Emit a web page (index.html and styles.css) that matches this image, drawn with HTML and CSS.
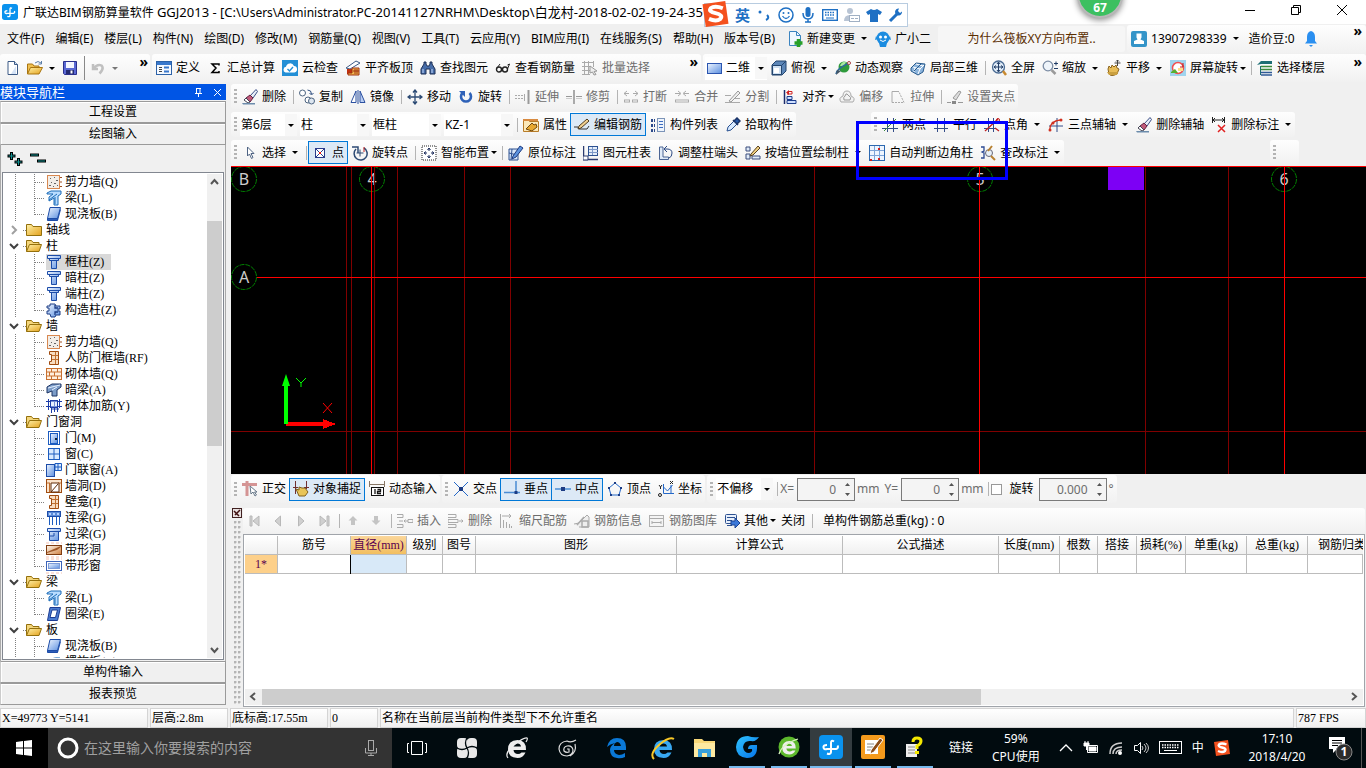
FILE: index.html
```html
<!DOCTYPE html>
<html lang="zh-CN">
<head>
<meta charset="utf-8">
<title>广联达BIM钢筋算量软件 GGJ2013</title>
<link rel="stylesheet" href="styles.css">
</head>
<body>
<svg class="sprite" aria-hidden="true">
<defs>
<linearGradient id="gb" x1="0" y1="0" x2="1" y2="1"><stop offset="0" stop-color="#eef5ff"/><stop offset="1" stop-color="#5b8fe0"/></linearGradient>
<linearGradient id="gy" x1="0" y1="0" x2="1" y2="1"><stop offset="0" stop-color="#fff1a8"/><stop offset="1" stop-color="#e3a11c"/></linearGradient>
<linearGradient id="go" x1="0" y1="0" x2="1" y2="1"><stop offset="0" stop-color="#fffaf0"/><stop offset="1" stop-color="#d08040"/></linearGradient>
<linearGradient id="gs" x1="0" y1="0" x2="1" y2="1"><stop offset="0" stop-color="#2fc4ff"/><stop offset="1" stop-color="#0572e8"/></linearGradient>
</defs>
<symbol id="logo" viewBox="0 0 24 24"><rect width="24" height="24" rx="4" fill="#0a92ee"/><path d="M15 6.500Q12 4.500 12 8v9q-.5 3-4 1.500M8 10q-4 0-3.500 2.500T8 14h9q3-1 1.500-3.500" fill="none" stroke="#fff" stroke-width="2"/></symbol>
<symbol id="new" viewBox="0 0 16 16"><path d="M3 1.500h6.500l3 3v10h-9.500z" fill="#fff" stroke="#3c5a86"/><path d="M9.500 1.500v3h3" fill="#cfe0f5" stroke="#3c5a86"/><path d="M11 6v8H6z" fill="#d5e3f6"/></symbol>
<symbol id="open" viewBox="0 0 16 16"><path d="M.5 14V4h5l1.500 2h5v3" fill="#f0c050" stroke="#a87410"/><path d="M.5 14l3-6.500h12L12 14z" fill="url(#gy)" stroke="#a87410"/><path d="M8 3q3-3 6 0M14.500 1v3h-3" fill="none" stroke="#5c7ea8"/></symbol>
<symbol id="save" viewBox="0 0 16 16"><path d="M1.500 1.500h13v13h-12l-1-1z" fill="#5968d4" stroke="#2a2f8c"/><path d="M4 2h8v6H4z" fill="#f4f6ff"/><path d="M4 10h8v4H4z" fill="#232a70"/><path d="M8.500 10.500h2v3h-2z" fill="#fff"/></symbol>
<symbol id="undo" viewBox="0 0 16 16"><path d="M3 4v5h5M3.500 8.500q4-5 8-3 3 3-2 8" fill="none" stroke="#c0c0c0" stroke-width="2.500"/></symbol>
<symbol id="define" viewBox="0 0 16 16"><rect x=".5" y="1.500" width="15" height="13" fill="#f5f9ff" stroke="#2c62a8"/><path d="M1 2h14v3H1z" fill="#3978cc"/><path d="M3 7.500h3M3 9.500h3M3 11.500h3" stroke="#444"/><path d="M8 7.500h5M8 11.500h5" stroke="#3978cc" stroke-width="2"/></symbol>
<symbol id="sigma" viewBox="0 0 16 16"><path d="M12 5.500V4H5l4 4-4 4.500h7V11" fill="none" stroke="#000" stroke-width="1.500"/></symbol>
<symbol id="cloud" viewBox="0 0 16 16"><rect width="16" height="16" fill="#238fd6"/><path d="M3.500 12.500a3 3 0 0 1 .5-5.800A4.200 4.200 0 0 1 12 6a3.300 3.300 0 0 1 .5 6.500z" fill="#fff"/><path d="M5.500 9l2 2 3.500-4" fill="none" stroke="#238fd6" stroke-width="1.400"/></symbol>
<symbol id="slabtop" viewBox="0 0 16 16"><path d="M1 8L11 1l4 2L5 9z" fill="#fff" stroke="#3c5a86"/><path d="M2 9h5v5H2z" fill="#c03010"/><path d="M7 8l7 0v7H3v-2h4z" fill="#f0b850" stroke="#a03010"/><path d="M8 11h6M10 9v5M12 9v5" stroke="#a03010"/></symbol>
<symbol id="bino" viewBox="0 0 16 16"><path d="M4 2h2v2l1 2h2l1-2V2h2v2l3 5v5h-5V9H6v5H1V9l3-5z" fill="#466ca8" stroke="#1d2f55"/><path d="M3 9v4M12 9v4" stroke="#c8dcff"/></symbol>
<symbol id="glasses" viewBox="0 0 16 16"><circle cx="4" cy="9.500" r="2.500" fill="none" stroke="#222" stroke-width="1.400"/><circle cx="10" cy="9.500" r="2.500" fill="none" stroke="#222" stroke-width="1.400"/><path d="M6 9h2M12.500 9l2-5-2 1M2 8l3-4" fill="none" stroke="#222"/></symbol>
<symbol id="batch" viewBox="0 0 16 16"><path d="M0 2.500h12M0 6.500h8M0 10.500h8M0 14.500h8M2.500 1v14M6.500 1v14M11.500 1v6" stroke="#aaa" fill="none"/><path d="M8 6l7 5-3 .5 2 3-2 .5-1.500-3L8 13z" fill="#eee" stroke="#999"/></symbol>
<symbol id="rect2d" viewBox="0 0 16 16"><rect x=".5" y="3.500" width="14" height="10" fill="url(#gb)" stroke="#2b55b0"/></symbol>
<symbol id="cube" viewBox="0 0 16 16"><path d="M1 5l4-4h10v10l-4 4H1z" fill="#5c86b8" stroke="#23456e"/><path d="M1.500 5.500h9v9h-9z" fill="#cfe0f2" stroke="#23456e"/><path d="M3 8h5v5H3z" fill="#fff"/><path d="M10.500 5.500L15 1" stroke="#23456e"/></symbol>
<symbol id="orbit" viewBox="0 0 16 16"><circle cx="9" cy="7" r="5.500" fill="#2f9b3c"/><path d="M5 6q2-5 6-4l-2 4z" fill="#a8e8a0"/><path d="M1 14q0-5 13-11" fill="none" stroke="#2c6a9c" stroke-width="1.500"/><path d="M2 10l4 1-5 4z" fill="#456"/><circle cx="14" cy="3" r="1.500" fill="#fff" stroke="#a44"/></symbol>
<symbol id="local3d" viewBox="0 0 16 16"><path d="M1 8l5-5 9 1-2 8-5 3-7-4z" fill="#8cb4dc" stroke="#285a8c"/><path d="M3 7l7 2 4-4M6 4l7 2M10 9l-2 5M5 8l-1 4" fill="none" stroke="#fff"/><path d="M4 11l7-7" stroke="#285a8c"/></symbol>
<symbol id="full" viewBox="0 0 16 16"><circle cx="7.500" cy="7" r="6" fill="#e0ecf8" stroke="#4b6c94" stroke-width="1.300"/><path d="M7.500 2.500v9M3 7h9M6 4l1.500-2L9 4M6 10l1.500 2L9 10M5 5.500L3 7l2 1.500M10 5.500L12 7l-2 1.500" fill="none" stroke="#203c66"/><path d="M12 11l3 4" stroke="#c88a30" stroke-width="2.500"/></symbol>
<symbol id="zoom" viewBox="0 0 16 16"><circle cx="6" cy="6" r="4.800" fill="#eef4fa" stroke="#7b8ca4" stroke-width="1.300"/><path d="M9.500 10l4 4" stroke="#9a9a9a" stroke-width="2.500"/><path d="M12 3.500h4M14 1.500v4M12 8.500h4" stroke="#203c66"/></symbol>
<symbol id="pan" viewBox="0 0 16 16"><path d="M2 9l1-3 2 2 1-3 2 2 2-2 1 3 2 1-2 5q-6 3-8 0z" fill="#e8bd58" stroke="#8a6420"/><path d="M1 12h11l-1 3H3z" fill="#caa040"/><path d="M11.500 0v6M8.500 3h6M10 1.500l1.500-1.500 1.500 1.500" stroke="#444" fill="none"/></symbol>
<symbol id="srot" viewBox="0 0 16 16"><rect width="16" height="16" fill="#9fd4ee"/><circle cx="8" cy="8" r="5.500" fill="#fff" stroke="#f05050" stroke-width="1.500"/><path d="M1 12l4-3 3 4H1z" fill="#58b030"/><path d="M8 8h5v3H8z" fill="#ffe08a"/><path d="M13 3v4h-3" fill="none" stroke="#c02020"/></symbol>
<symbol id="floors" viewBox="0 0 16 16"><path d="M0 5l4-4h11v3H4z" fill="#1d6e74"/><path d="M4 6.500h11M4 9.500h11" stroke="#3b8a3c" stroke-width="1.500"/><path d="M4 12.500h11M4 15h11" stroke="#2f5a96" stroke-width="1.500"/><path d="M3.500 6v9" stroke="#1d6e74"/></symbol>
<symbol id="brush" viewBox="0 0 16 16"><path d="M8 7l6-6.500 1.500 2L11 9z" fill="#e8eef8" stroke="#3c4f86"/><path d="M4 9l4-3 3 3-3 4z" fill="#c05a7a" stroke="#602040"/><path d="M4 9l4 4-2 1-4-3z" fill="#fff" stroke="#445"/><path d="M0 14h7l6 0v1.500H1z" fill="#6c8cac"/></symbol>
<symbol id="copy" viewBox="0 0 16 16"><circle cx="3.500" cy="4" r="3" fill="#fff" stroke="#4d6480"/><circle cx="9" cy="11" r="3" fill="#fff" stroke="#4d6480"/><circle cx="12.500" cy="12" r="3" fill="#dde6f0" stroke="#4d6480"/><path d="M8.500 1q4 0 4 4M10.500 4l2 2 2-2" fill="none" stroke="#2f4f80"/></symbol>
<symbol id="mirror" viewBox="0 0 16 16"><path d="M1 13.500L6 2v11.500z" fill="#fff" stroke="#2b50a0"/><path d="M15 13.500L10 2v11.500z" fill="#b9cdf2" stroke="#2b50a0"/><path d="M8 1v14" stroke="#2b50a0"/></symbol>
<symbol id="move" viewBox="0 0 16 16"><path d="M8 1v14M1 8h14M6 3.500L8 1l2 2.500M6 12.500L8 15l2-2.500M3.500 6L1 8l2.500 2M12.500 6L15 8l-2.500 2" fill="none" stroke="#2c4a74" stroke-width="1.300"/></symbol>
<symbol id="rotate" viewBox="0 0 16 16"><path d="M4.500 4a5 5 0 1 0 7 0" fill="none" stroke="#2f62b8" stroke-width="2.600"/><path d="M1 2h6v6z" fill="#2f62b8"/></symbol>
<symbol id="extend" viewBox="0 0 16 16"><path d="M0 6.500h8M0 9.500h8" stroke="#aaa" stroke-dasharray="2 1"/><path d="M9.500 5v7" stroke="#aaa"/><path d="M13.500 1v14" stroke="#999" stroke-width="2"/></symbol>
<symbol id="trim" viewBox="0 0 16 16"><path d="M0 7.500h6M10 7.500h6" stroke="#999"/><path d="M0 9.500h6M10 9.500h6" stroke="#ccc"/><path d="M8 1v14" stroke="#aaa" stroke-width="2"/></symbol>
<symbol id="brk" viewBox="0 0 16 16"><path d="M1 4.500h5M4 2L1 4.500 4 7M15 4.500h-5M12 2l3 2.500L12 7" fill="none" stroke="#aaa"/><path d="M1 12h6M9 12h6" stroke="#aaa" stroke-width="3"/><path d="M2 12h4M10 12h4" stroke="#fff"/></symbol>
<symbol id="merge" viewBox="0 0 16 16"><path d="M1 4.500h5M4 2l3 2.500L4 7M15 4.500h-5M12 2L9 4.500 12 7" fill="none" stroke="#aaa"/><path d="M1 12h14" stroke="#aaa" stroke-width="3"/><path d="M2 12h12" stroke="#fff"/></symbol>
<symbol id="split" viewBox="0 0 16 16"><path d="M0 6.500h6M0 13.500h15M10 9.500h5" stroke="#aaa"/><path d="M4 12L13 2l2 2-9 9z" fill="#eee" stroke="#999"/></symbol>
<symbol id="align" viewBox="0 0 16 16"><path d="M2.500 1v14" stroke="#1c2c6c" stroke-width="1.500"/><path d="M5 5h5V2.500H7" fill="none" stroke="#d02020"/><path d="M7 1L4 3.500 7 6z" fill="#d02020"/><path d="M5 7.500h5v3H5zM5 11.500h9v3H5z" fill="#cfe0ff" stroke="#1c3c8c"/></symbol>
<symbol id="offset" viewBox="0 0 16 16"><path d="M2 13q-3-4 2-6 0-5 4-5t4 5q5 2 2 6z" fill="#f2f2f2" stroke="#aaa"/><path d="M5 11q-1-3 1-4 1-3 2-2t2 2q3 1 1 4z" fill="none" stroke="#999"/></symbol>
<symbol id="stretch" viewBox="0 0 16 16"><path d="M2 13.500V2.500h7" fill="none" stroke="#aaa"/><path d="M2 13.500h12L9 3" fill="none" stroke="#aaa" stroke-dasharray="2 1"/></symbol>
<symbol id="grip" viewBox="0 0 16 16"><path d="M0 13.500h4M11 13.500h5" stroke="#999"/><path d="M6 9l6-7 2 1-5 8z" fill="#ddd" stroke="#999"/><path d="M5 12h4v3H5z" fill="#888"/></symbol>
<symbol id="prop" viewBox="0 0 16 16"><path d="M.5 2.500h5l1 2h9v10H.5z" fill="#fbe8b8" stroke="#b87c28"/><path d="M0 2h15v2H0z" fill="#d88a40"/><path d="M3 12l6-6 2 2 2-1 1 3-5 4z" fill="#e8a830" stroke="#704810"/></symbol>
<symbol id="editbar" viewBox="0 0 16 16"><path d="M0 10h4l1 2h8l2-3" fill="none" stroke="#333"/><path d="M5 9l8-7 2 2-8 7-3 1z" fill="#f0d090" stroke="#503c20"/></symbol>
<symbol id="list" viewBox="0 0 16 16"><path d="M1 3.500h4M1 8.500h4M1 13.500h4" stroke="#2c4a8c" stroke-width="3" stroke-dasharray="2 1"/><rect x="7.500" y="1.500" width="7" height="13" fill="#eef4fc" stroke="#7c94b8"/><path d="M9 4.500h4M9 7.500h4M9 10.500h4" stroke="#3c6cc0"/></symbol>
<symbol id="pick" viewBox="0 0 16 16"><path d="M2 14l1-4 6-6 3 3-6 6z" fill="#d8eaff" stroke="#285090"/><path d="M8 3l5 5M9 4l3-3 3 3-3 3z" fill="#2458a8" stroke="#1c3468" stroke-width="1.500"/></symbol>
<symbol id="twopt" viewBox="0 0 16 16"><path d="M0 5.500h16M0 11.500h16M5.500 1v14M11.500 1v14" stroke="#334c88"/><path d="M2 14L14 2" stroke="#3c8c3c"/><circle cx="11.500" cy="5" r="1.500" fill="#c02020"/></symbol>
<symbol id="para" viewBox="0 0 16 16"><path d="M1 4.500h14M1 11.500h14M4.500 1v14M11.500 1v14" stroke="#334c88"/></symbol>
<symbol id="ptang" viewBox="0 0 16 16"><path d="M0 5.500h12M0 11.500h12M4.500 1v14M9.500 1v14" stroke="#334c88"/><path d="M1 14L14 2M11 11l4 3" stroke="#c02020" stroke-width="1.300"/><circle cx="14" cy="3" r="1.500" fill="none" stroke="#c02020"/></symbol>
<symbol id="three" viewBox="0 0 16 16"><path d="M9 1v14M1 9h14" stroke="#334c88"/><path d="M2 14q-1-10 11-11" fill="none" stroke="#d03020" stroke-width="1.300"/><circle cx="2" cy="13" r="1.500" fill="#d03020"/><circle cx="13" cy="3" r="1.500" fill="#d03020"/><circle cx="5" cy="6" r="1.500" fill="#d03020"/></symbol>
<symbol id="deldim" viewBox="0 0 16 16"><path d="M1.500 0v6M13.500 0v6M1 3h12M4 1L2 3l2 2M11 1l2 2-2 2" fill="none" stroke="#222"/><path d="M7 8l7 7M14 8l-7 7" stroke="#e02020" stroke-width="1.500"/></symbol>
<symbol id="cursor" viewBox="0 0 16 16"><path d="M5.500 2v9l2-2 2 4.500 1.500-1-2-4h3z" fill="#fff" stroke="#4f6484"/></symbol>
<symbol id="point" viewBox="0 0 16 16"><rect x="3.500" y="3.500" width="9" height="9" fill="#fff" stroke="#2a3c8c"/><path d="M4 4l8 8M12 4l-8 8" stroke="#2a3c8c"/><path d="M7 7h2v2H7z" fill="#e02020"/></symbol>
<symbol id="rotpt" viewBox="0 0 16 16"><path d="M12 3a6.500 6.500 0 1 1-8 1" fill="none" stroke="#2c4a74" stroke-width="1.500"/><path d="M0 2h6v6" fill="none" stroke="#2c4a74" stroke-width="1.500"/><path d="M8 4.500v7M4.500 8h7" stroke="#2c4a74"/><path d="M12 2v5" stroke="#c02020"/></symbol>
<symbol id="smart" viewBox="0 0 16 16"><rect x="1" y="1" width="14" height="14" fill="#fff" stroke="#222" stroke-dasharray="1 1"/><path d="M8 3v3M8 10v3M3 8h3M10 8h3M6.500 5L8 3l1.500 2M6.500 11L8 13l1.500-2M5 6.500L3 8l2 1.500M11 6.500L13 8l-2 1.500" fill="none" stroke="#1c2c5c"/></symbol>
<symbol id="situ" viewBox="0 0 16 16"><path d="M1 4h9v11H1z" fill="#d8e6f8" stroke="#2c5090"/><path d="M1 8l8 2M4 4l-1 11" stroke="#2c5090"/><path d="M5 11l7-10 3 2-7 9-4 2z" fill="#5c94e0" stroke="#203c80"/></symbol>
<symbol id="coltab" viewBox="0 0 16 16"><path d="M.5 1v14M0 14.500h15" stroke="#2c3c70" stroke-width="1.500"/><rect x="5.500" y="1.500" width="9" height="9" fill="#e4edf9" stroke="#2c5090"/><path d="M6 4.500h9M6 7.500h9M9.500 2v8" stroke="#7c98c8"/><path d="M0 11h5v4H0z" fill="#fff" stroke="#2c3c70"/></symbol>
<symbol id="adj" viewBox="0 0 16 16"><path d="M1.500 2v12.500h9V12H5V2z" fill="#dfeaf8" stroke="#4a6494"/><path d="M7 4h2q5 0 5 4t-3 5M9 1L6 4l3 3" fill="none" stroke="#2c4a84"/></symbol>
<symbol id="wallcol" viewBox="0 0 16 16"><path d="M1 2h4v4H1zM1 9h4v5H1zM7 11h8v3H7z" fill="#dfeaf8" stroke="#3a4c7c"/><path d="M6 9l7-8 2 2-7 7-3 1z" fill="#f0d080" stroke="#584020"/></symbol>
<symbol id="corner" viewBox="0 0 16 16"><rect x=".5" y=".5" width="15" height="15" fill="#eef5ff" stroke="#2c68b0"/><path d="M5.500 1v14M10.500 1v14M1 5.500h14M1 10.500h14" stroke="#7ca4d8"/><path d="M1 14h2v2H1zM9 13h2v2H9zM9 3h2v2H9z" fill="#d02020"/></symbol>
<symbol id="check" viewBox="0 0 16 16"><path d="M1 2h3v4l-2 1 2 1v5H1" fill="none" stroke="#2c4a94" stroke-width="1.300"/><circle cx="9" cy="8" r="3.500" fill="#e8f0f8" stroke="#667"/><path d="M11 11l4 4M8 6l4-5" stroke="#b88030" stroke-width="2"/></symbol>
<symbol id="ortho" viewBox="0 0 16 16"><path d="M0 3.500h15M5 0v15" stroke="#d49494" stroke-width="3"/><path d="M8 5l1 8 2-2 2 4 1.500-1-2-3h2.500z" fill="#fff" stroke="#678"/></symbol>
<symbol id="snap" viewBox="0 0 16 16"><path d="M2.500 0v13M13.500 0v8M0 6.500h5M11 6.500h5" stroke="#703030"/><path d="M3 8l3 1 0-3 3 1 3 0 3 4-3 4H6z" fill="#e8c458" stroke="#80601c"/></symbol>
<symbol id="dyn" viewBox="0 0 16 16"><path d="M.5 0v6M15.500 0v6M0 3.500h16" stroke="#876"/><rect x="2.500" y="6.500" width="12" height="8" fill="#fff" stroke="#111"/><path d="M6 8v5M8.500 8.500h3v2h-3v2h3.500" fill="none" stroke="#111" stroke-width="1.300"/></symbol>
<symbol id="inter" viewBox="0 0 16 16"><path d="M1 1l14 14M15 1L1 15" stroke="#2468c8"/><path d="M6 6h4v4H6z" fill="#1c3c84"/></symbol>
<symbol id="perp" viewBox="0 0 16 16"><path d="M0 11.500h16M12 0v12" stroke="#4a8cd4" stroke-width="1.500"/><path d="M10.500 10h3v3h-3z" fill="#1c3c84"/></symbol>
<symbol id="mid" viewBox="0 0 16 16"><path d="M0 8h16" stroke="#4a8cd4" stroke-width="1.500"/><path d="M6 6h4v4H6z" fill="#1c3c84"/></symbol>
<symbol id="vert" viewBox="0 0 16 16"><path d="M8 2l6 5-2 7H4L2 7z" fill="none" stroke="#2468c8"/><path d="M7 1h2v2H7zM1 6h2v2H1zM13 6h2v2h-2zM3 13h2v2H3zM11 13h2v2h-2z" fill="#1c3c84"/></symbol>
<symbol id="coord" viewBox="0 0 16 16"><path d="M5.500 3v9.500H16M5.500 6l4 4 5-6M13 4v9" fill="none" stroke="#2468c8"/><path d="M1 4l1.500 2L4 4M2.500 6v2M12 0l3 3M15 0l-3 3" stroke="#222" fill="none"/><circle cx="2" cy="14" r="1.500" fill="none" stroke="#222"/></symbol>
<symbol id="first" viewBox="0 0 16 16"><path d="M3 3h2v10H3zM12 3v10L6 8z" fill="#d0d0d0" stroke="#b8b8b8"/></symbol>
<symbol id="prev" viewBox="0 0 16 16"><path d="M10.500 3v10L5 8z" fill="#d0d0d0" stroke="#b8b8b8"/></symbol>
<symbol id="next" viewBox="0 0 16 16"><path d="M5.500 3v10L11 8z" fill="#d0d0d0" stroke="#b8b8b8"/></symbol>
<symbol id="last" viewBox="0 0 16 16"><path d="M11 3h2v10h-2zM4 3v10l6-5z" fill="#d0d0d0" stroke="#b8b8b8"/></symbol>
<symbol id="up" viewBox="0 0 16 16"><path d="M8 3l4.500 4.500H10V12H6V7.500H3.500z" fill="#c4c4c4"/></symbol>
<symbol id="down" viewBox="0 0 16 16"><path d="M8 12L3.500 7.500H6V3h4v4.500h2.500z" fill="#c4c4c4"/></symbol>
<symbol id="ins" viewBox="0 0 16 16"><path d="M0 1.500h6v3H0M0 11.500h6v3H0M6 8H2M11 6.500h5v3h-5zM7 8h4M8.500 6.500L7 8l1.500 1.500" fill="none" stroke="#aaa"/></symbol>
<symbol id="rem" viewBox="0 0 16 16"><path d="M0 1.500h8v3H0M0 11.500h8v3H0M0 6.500h10v3H0zM11 8h4M13.500 6.500L15 8l-1.500 1.500" fill="none" stroke="#aaa"/></symbol>
<symbol id="scale" viewBox="0 0 16 16"><path d="M1.500 1v14M3 3h9M10 1l2 2-2 2M4.500 7v8M7.500 9v6M10.500 11v4M12.500 13v2" fill="none" stroke="#aaa"/></symbol>
<symbol id="info" viewBox="0 0 16 16"><path d="M0 11l5-1 8-8 2 2v10H5" fill="#eee" stroke="#aaa"/><path d="M3 12l7-8M8 8h6v6H8z" fill="none" stroke="#aaa" stroke-width="1.500"/></symbol>
<symbol id="lib" viewBox="0 0 16 16"><rect x=".5" y="2.500" width="14" height="11" fill="#f4f4f4" stroke="#b0b0b0"/><path d="M1 5.500h13M3 8v3M3 9.500h9M12 8v3" stroke="#aaa"/></symbol>
<symbol id="other" viewBox="0 0 16 16"><rect x="1.500" y="1.500" width="11" height="9" rx="1" fill="#e8f0fc" stroke="#2c5090"/><path d="M3 4.500h8M3 7.500h5M3 12.500h5" stroke="#2c5090"/><path d="M7 8h4V5l5 5-5 5v-3H7z" fill="#3c78d8" stroke="#1c4494"/></symbol>
<symbol id="addpage" viewBox="0 0 16 16"><path d="M2.500 .5h7l4 4v10h-11z" fill="#f0f8ff" stroke="#3c84c0"/><path d="M9.500 .5v4h4" fill="none" stroke="#3c84c0"/><path d="M11.500 8v8M7.500 12h8" stroke="#28a028" stroke-width="3.500"/></symbol>
<symbol id="mascot" viewBox="0 0 16 16"><circle cx="8" cy="7" r="6.500" fill="#1c8ce0"/><path d="M1 5L0 9l3-1M15 5l1 4-3-1M4 12h8l-1 4H5z" fill="#1c8ce0"/><circle cx="5.500" cy="6" r="1.500" fill="#fff"/><circle cx="10.500" cy="6" r="1.500" fill="#fff"/><path d="M5 9q3 3 6 0" fill="none" stroke="#fff"/></symbol>
<symbol id="user" viewBox="0 0 16 16"><rect width="16" height="16" rx="2" fill="#3494c8"/><path d="M5.500 2.500h5v4l-1 2 3.500 1.500V13H3v-3l3.500-1.500-1-2z" fill="#fff"/></symbol>
<symbol id="bell" viewBox="0 0 16 16"><path d="M8 0q4 1 4 6v4l2 2.500H2L4 10V6q0-5 4-6zM6 14h4l-2 2z" fill="#2a8ff0"/></symbol>
<symbol id="plus2" viewBox="0 0 16 16"><path d="M4.500 1v8M.5 5h8M11.500 7v8M7.500 11h8" stroke="#000" stroke-width="3"/><path d="M4.500 2v6M1.500 5h6M11.500 8v6M8.500 11h6" stroke="#109090"/></symbol>
<symbol id="minus2" viewBox="0 0 16 16"><path d="M0 4h9M7 10h9" stroke="#000" stroke-width="3"/><path d="M1 4h7M8 10h7" stroke="#109090"/></symbol>
<symbol id="folder" viewBox="0 0 16 16"><path d="M.5 13.500v-11h5l1.500 2h8.500v9z" fill="url(#gy)" stroke="#94700c"/></symbol>
<symbol id="fopen" viewBox="0 0 16 16"><path d="M.5 13.500v-11h5l1.500 2h6v2" fill="#f4d67c" stroke="#94700c"/><path d="M.5 13.500l3-7h12l-2.500 7z" fill="url(#gy)" stroke="#94700c"/></symbol>
<symbol id="conc" viewBox="0 0 16 16"><rect x="1.500" y="1.500" width="12" height="13" fill="#f2eee8" stroke="#d88850"/><path d="M4 4h1v1H4zM8 3h1v1H8zM10 6h2v1h-2zM5 8h1v1H5zM8 9h2v1H8zM3 11h2v1H3zM7 12h1v1H7zM11 11h1v1h-1z" fill="#666"/><path d="M14 3.500h2M14 8h2M14 12.500h2" stroke="#a05020"/></symbol>
<symbol id="beam" viewBox="0 0 16 16"><path d="M1 3l4-2h10v3l-3 2v9H8V8L3 11V7l4-3H1z" fill="#b8dcff" stroke="#1c6cb8"/><path d="M3 10l8-6M9 7v7" stroke="#1c6cb8"/></symbol>
<symbol id="slab" viewBox="0 0 16 16"><path d="M4 1.500h10.500l-3 11H1.500z" fill="url(#gb)" stroke="#1c4ca8"/><path d="M1.500 12.500h10v2h-10zM11.500 14.500l3-11" fill="#2c5cb8" stroke="#1c4ca8"/></symbol>
<symbol id="col" viewBox="0 0 16 16"><path d="M1.500 1.500h13v3h-13zM3.500 4.500h9v2h-9zM5.500 6.500h5v8h-5z" fill="url(#gb)" stroke="#1c4ca8"/></symbol>
<symbol id="gz" viewBox="0 0 16 16"><path d="M4 2h5l1 2h4v3h-2v2h2v4h-4l-1 2H5l-1-3H1V9h2V6H1V4h3z" fill="url(#gb)" stroke="#1c3c84"/><path d="M9 3v3h3M9 13v-3h3" fill="none" stroke="#1c3c84" stroke-width="1.300"/></symbol>
<symbol id="frame" viewBox="0 0 16 16"><path d="M3.500 1.500h9v13h-9v-3h2v-7h-2z" fill="#f8dcc0" stroke="#a04c10"/><path d="M6 5.500h6M6 9.500h6M9.500 2v12" stroke="#c07030"/></symbol>
<symbol id="brick" viewBox="0 0 16 16"><rect x=".5" y="2.500" width="15" height="11" fill="#fff0e0" stroke="#c87030"/><path d="M1 6h14M1 10h14M5.500 3v3M11.500 3v3M8.500 6v4M3.500 6v4M5.500 10v4M11.500 10v4" stroke="#c87030"/></symbol>
<symbol id="dbeam" viewBox="0 0 16 16"><path d="M1 5l5-3h9v3l-4 3v6H6V9l-5 2z" fill="#7c9cc8" stroke="#1c3464"/><path d="M2 6l8-2 4-1M6 8l5-3" stroke="#e4f0ff"/></symbol>
<symbol id="rebar" viewBox="0 0 16 16"><path d="M2.500 1v11M13.500 1v9M0 3.500h16M0 8.500h16M5 11h8M8.500 2v12M5.500 8v7M11.500 2v12" fill="none" stroke="#1c3ca8"/><rect x="4.500" y="2.500" width="7" height="7" fill="#cfe0ff" fill-opacity=".5" stroke="#1c3ca8"/></symbol>
<symbol id="door" viewBox="0 0 16 16"><rect x="2.500" y="1.500" width="11" height="13" fill="#fff" stroke="#1c5cc0"/><rect x="4.500" y="3.500" width="7" height="10" fill="url(#gb)" stroke="#1c5cc0"/><path d="M9 8h2v2H9z" fill="#123"/></symbol>
<symbol id="win" viewBox="0 0 16 16"><rect x="2.500" y="2.500" width="11" height="11" fill="#d8e9ff" stroke="#1c5cc0"/><path d="M8 3v10M3 8h10" stroke="#1c5cc0"/></symbol>
<symbol id="dw" viewBox="0 0 16 16"><rect x=".5" y="2.500" width="8" height="12" fill="url(#gb)" stroke="#1c4ca8"/><path d="M9 1.500h6.500v7H9zM12 2v6M9 5h6" fill="#d8e9ff" stroke="#1c5cc0"/></symbol>
<symbol id="hole" viewBox="0 0 16 16"><rect x=".5" y="1.500" width="15" height="13" fill="#fbe4cc" stroke="#a04c10"/><path d="M1 5h3M12 5h3M3.500 5v9" stroke="#c07030"/><path d="M5 5h8v9H5zM5 14l7-8" fill="#fff" stroke="#602c08"/></symbol>
<symbol id="ll" viewBox="0 0 16 16"><rect x="1.500" y="1.500" width="13" height="5" fill="#5c8cd8" stroke="#1c4ca8"/><path d="M3 3h2v2H3zM7 3h2v2H7zM11 3h2v2h-2z" fill="#b8d4ff"/><path d="M3.500 7v8M6.500 7v8M10.500 7v8M13.500 7v8" stroke="#1c5cc0"/></symbol>
<symbol id="gl" viewBox="0 0 16 16"><path d="M1.500 2.500h13v3h-13zM3.500 5.500h9v9h-9z" fill="url(#gb)" stroke="#1c4ca8"/><path d="M4 10h4V7" stroke="#1c4ca8" fill="none"/></symbol>
<symbol id="sh" viewBox="0 0 16 16"><rect x=".5" y="3.500" width="15" height="9" fill="url(#go)" stroke="#803c10"/><path d="M1 11l10-3 4-3v-1L1 10z" fill="#a05828"/><path d="M0 1h16M0 15h16" stroke="#f4c0b0" stroke-dasharray="3 2"/></symbol>
<symbol id="sw" viewBox="0 0 16 16"><rect x=".5" y="3.500" width="15" height="9" fill="#fff" stroke="#3c64b8"/><rect x="2.500" y="5.500" width="11" height="5" fill="url(#gb)" stroke="#7c9cd8"/><path d="M0 1h16M0 15h16" stroke="#f4c0b0" stroke-dasharray="3 2"/></symbol>
<symbol id="ring" viewBox="0 0 16 16"><path d="M4 1.500h10.500l-3 13H1.500z" fill="#4c7cd0" stroke="#1c3c94"/><path d="M6 4h5.500l-2 7.500H4z" fill="#fff" stroke="#1c3c94"/></symbol>
<symbol id="spiral" viewBox="0 0 16 16"><path d="M1 9q3-6 13-5l1 3Q6 6 3 13z" fill="url(#gb)" stroke="#1c6cb8"/></symbol>
<symbol id="sogou" viewBox="0 0 16 16"><path d="M0 2L14 0l2 14-14 2z" fill="#f4511e"/><path d="M12.500 4.500q-5-2-7.500 0-1.500 2 3 3 5 1 3 3.500-2.500 2-7 0" fill="none" stroke="#fff" stroke-width="2.400"/></symbol>
<symbol id="eball" viewBox="0 0 24 24"><path d="M21 14H8.500q.5 4 4.500 4 2 0 3.500-1.500h4Q18 22 12.500 22 3 21.500 3 13T12.500 4Q21.500 4.500 21 14zM8.500 10.500h7.500q-.5-3-3.500-3t-4 3z" fill="currentColor"/></symbol>
</svg>

<div class="app">
<header class="titlebar">
  <svg class="ic"><use href="#logo"/></svg>
  <h1>广联达BIM钢筋算量软件 <span>GGJ2013 - [C:\</span>Users\Administrator.PC<span>-20141127NRHM\Desktop\白龙村-2018-02-02-19-24-35</span></h1>
  <div class="winctl">
    <button aria-label="最小化"><svg width="12" height="12"><path d="M1 6.500h10" stroke="#000"/></svg></button>
    <button aria-label="还原"><svg width="12" height="12"><path d="M1.500 3.500h7v7h-7zM3.500 3V1.500h7v7H9" fill="none" stroke="#000"/></svg></button>
    <button aria-label="关闭"><svg width="12" height="12"><path d="M1 1l10 10M11 1L1 11" stroke="#000"/></svg></button>
  </div>
  <div class="ball">67</div>
  <div class="ime">
    <svg class="s"><use href="#sogou"/></svg>
    <b>英</b>
    <svg width="16" height="16" viewBox="0 0 16 16"><circle cx="4" cy="5" r="1.500" fill="#1e70c4"/><path d="M11 8q3 3-1 5" fill="none" stroke="#1e70c4" stroke-width="2"/></svg>
    <svg width="16" height="16" viewBox="0 0 16 16"><circle cx="8" cy="8" r="7" fill="none" stroke="#1e70c4" stroke-width="1.500"/><path d="M4.500 9q3.500 5 7 0" fill="none" stroke="#1e70c4" stroke-width="1.300"/><circle cx="5.500" cy="6" r="1" fill="#1e70c4"/><circle cx="10.500" cy="6" r="1" fill="#1e70c4"/></svg>
    <svg width="16" height="16" viewBox="0 0 16 16"><rect x="5.500" y="0" width="5" height="10" rx="2.500" fill="#1e70c4"/><path d="M3 6q0 6 5 6t5-6M8 12v3M5 15h6" fill="none" stroke="#1e70c4" stroke-width="1.500"/></svg>
    <svg width="16" height="16" viewBox="0 0 16 16"><rect x=".7" y="2.700" width="14.600" height="10.600" fill="none" stroke="#1e70c4" stroke-width="1.400"/><path d="M3 5.500h10M3 8h10" stroke="#1e70c4" stroke-width="1.500" stroke-dasharray="1.500 1"/><path d="M4 11h8" stroke="#1e70c4"/></svg>
    <svg width="16" height="16" viewBox="0 0 16 16"><circle cx="6" cy="4" r="3" fill="#b8c4d4"/><path d="M0 14q0-6 6-6h3v6z" fill="#b8c4d4"/><rect x="5.500" y="8.500" width="10" height="6" fill="#fff" stroke="#a0b0c4"/><path d="M7 11.500h3M11 11.500h3" stroke="#a0b0c4"/></svg>
    <svg width="16" height="16" viewBox="0 0 16 16"><path d="M5 2q3 2 6 0l5 3-2 3-2-1v8H4V7L2 8 0 5z" fill="#1e70c4"/></svg>
    <svg width="16" height="16" viewBox="0 0 16 16"><path d="M2 14l7-7" stroke="#1e70c4" stroke-width="3"/><path d="M14 4.500a3.500 3.500 0 1 1-3-3L10 4l2 2z" fill="#1e70c4"/></svg>
  </div>
</header>

<nav class="menubar">
  <div class="menus">
  <button>文件(F)</button><button>编辑(E)</button><button>楼层(L)</button><button>构件(N)</button><button>绘图(D)</button><button>修改(M)</button><button>钢筋量(Q)</button><button>视图(V)</button><button>工具(T)</button><button>云应用(Y)</button><button>BIM应用(I)</button><button>在线服务(S)</button><button>帮助(H)</button><button>版本号(B)</button>
  </div>
  <button class="t"><svg class="ic"><use href="#addpage"/></svg>新建变更<i class="dd"></i></button>
  <button class="t"><svg class="ic"><use href="#mascot"/></svg>广小二</button>
  <a class="tip" href="#">为什么筏板XY方向布置..</a>
  <div class="band account">
    <button class="t"><svg class="ic"><use href="#user"/></svg>13907298339<i class="dd"></i></button>
    <span class="beans">造价豆:0</span>
    <button class="t" aria-label="通知"><svg class="ic"><use href="#bell"/></svg></button>
    <span class="more">»</span>
  </div>
</nav>

<div class="toprow">
  <div class="band file">
    <button class="t" aria-label="新建"><svg class="ic"><use href="#new"/></svg></button>
    <button class="t" aria-label="打开"><svg class="ic"><use href="#open"/></svg><i class="dd"></i></button>
    <button class="t" aria-label="保存"><svg class="ic"><use href="#save"/></svg></button>
    <i class="sep tall"></i>
    <button class="t" aria-label="撤销" disabled><svg class="ic"><use href="#undo"/></svg><i class="dd"></i></button>
    <span class="more">»</span>
  </div>
  <div class="band calc">
    <button class="t"><svg class="ic"><use href="#define"/></svg>定义</button>
    <button class="t"><svg class="ic"><use href="#sigma"/></svg>汇总计算</button>
    <button class="t"><svg class="ic"><use href="#cloud"/></svg>云检查</button>
    <button class="t"><svg class="ic"><use href="#slabtop"/></svg>平齐板顶</button>
    <button class="t"><svg class="ic"><use href="#bino"/></svg>查找图元</button>
    <button class="t"><svg class="ic"><use href="#glasses"/></svg>查看钢筋量</button>
    <button class="t" disabled><svg class="ic"><use href="#batch"/></svg>批量选择</button>
    <span class="more">»</span>
  </div>
  <div class="band view">
    <label class="pick2d"><svg class="ic"><use href="#rect2d"/></svg><select aria-label="视图维度"><option>二维</option></select></label>
    <button class="t"><svg class="ic"><use href="#cube"/></svg>俯视<i class="dd"></i></button>
    <button class="t"><svg class="ic"><use href="#orbit"/></svg>动态观察</button>
    <button class="t"><svg class="ic"><use href="#local3d"/></svg>局部三维</button>
    <i class="sep"></i>
    <button class="t"><svg class="ic"><use href="#full"/></svg>全屏</button>
    <button class="t"><svg class="ic"><use href="#zoom"/></svg>缩放<i class="dd"></i></button>
    <button class="t"><svg class="ic"><use href="#pan"/></svg>平移<i class="dd"></i></button>
    <button class="t"><svg class="ic"><use href="#srot"/></svg>屏幕旋转<i class="dd near"></i></button>
    <i class="sep"></i>
    <button class="t"><svg class="ic"><use href="#floors"/></svg>选择楼层</button>
    <span class="more">»</span>
  </div>
</div>

<div class="main">
<aside class="side">
  <div class="sidehead"><span>模块导航栏</span>
    <button aria-label="固定"><svg width="9" height="9"><path d="M2.500 0v5M1 5.500h7M2 .5h5M6 0v5M4.500 6v3" stroke="#fff" fill="none"/></svg></button>
    <button aria-label="关闭"><svg width="9" height="9"><path d="M1 1l7 7M8 1L1 8" stroke="#fff"/></svg></button>
  </div>
  <button class="acc">工程设置</button>
  <button class="acc">绘图输入</button>
  <div class="treepane">
    <div class="treebar"><button aria-label="展开"><svg class="ic"><use href="#plus2"/></svg></button><button aria-label="折叠"><svg class="ic"><use href="#minus2"/></svg></button></div>
    <div class="treebox">
      <ul class="tree">
        <li class="k"><svg class="ic"><use href="#conc"/></svg><span>剪力墙(Q)</span></li>
        <li class="k"><svg class="ic"><use href="#beam"/></svg><span>梁(L)</span></li>
        <li class="k end"><svg class="ic"><use href="#slab"/></svg><span>现浇板(B)</span></li>
        <li class="g shut"><svg class="ic"><use href="#folder"/></svg><span>轴线</span></li>
        <li class="g"><svg class="ic"><use href="#fopen"/></svg><span>柱</span></li>
        <li class="k sel"><svg class="ic"><use href="#col"/></svg><span>框柱(Z)</span></li>
        <li class="k"><svg class="ic"><use href="#col"/></svg><span>暗柱(Z)</span></li>
        <li class="k"><svg class="ic"><use href="#col"/></svg><span>端柱(Z)</span></li>
        <li class="k end"><svg class="ic"><use href="#gz"/></svg><span>构造柱(Z)</span></li>
        <li class="g"><svg class="ic"><use href="#fopen"/></svg><span>墙</span></li>
        <li class="k"><svg class="ic"><use href="#conc"/></svg><span>剪力墙(Q)</span></li>
        <li class="k"><svg class="ic"><use href="#frame"/></svg><span>人防门框墙(RF)</span></li>
        <li class="k"><svg class="ic"><use href="#brick"/></svg><span>砌体墙(Q)</span></li>
        <li class="k"><svg class="ic"><use href="#dbeam"/></svg><span>暗梁(A)</span></li>
        <li class="k end"><svg class="ic"><use href="#rebar"/></svg><span>砌体加筋(Y)</span></li>
        <li class="g"><svg class="ic"><use href="#fopen"/></svg><span>门窗洞</span></li>
        <li class="k"><svg class="ic"><use href="#door"/></svg><span>门(M)</span></li>
        <li class="k"><svg class="ic"><use href="#win"/></svg><span>窗(C)</span></li>
        <li class="k"><svg class="ic"><use href="#dw"/></svg><span>门联窗(A)</span></li>
        <li class="k"><svg class="ic"><use href="#hole"/></svg><span>墙洞(D)</span></li>
        <li class="k"><svg class="ic"><use href="#frame"/></svg><span>壁龛(I)</span></li>
        <li class="k"><svg class="ic"><use href="#ll"/></svg><span>连梁(G)</span></li>
        <li class="k"><svg class="ic"><use href="#gl"/></svg><span>过梁(G)</span></li>
        <li class="k"><svg class="ic"><use href="#sh"/></svg><span>带形洞</span></li>
        <li class="k end"><svg class="ic"><use href="#sw"/></svg><span>带形窗</span></li>
        <li class="g"><svg class="ic"><use href="#fopen"/></svg><span>梁</span></li>
        <li class="k"><svg class="ic"><use href="#beam"/></svg><span>梁(L)</span></li>
        <li class="k end"><svg class="ic"><use href="#ring"/></svg><span>圈梁(E)</span></li>
        <li class="g"><svg class="ic"><use href="#fopen"/></svg><span>板</span></li>
        <li class="k"><svg class="ic"><use href="#slab"/></svg><span>现浇板(B)</span></li>
        <li class="k"><svg class="ic"><use href="#spiral"/></svg><span>螺旋板(B)</span></li>
      </ul>
      <div class="vscroll"><svg width="15" height="16"><path d="M4 10l3.500-4 3.500 4" fill="none" stroke="#555" stroke-width="2"/></svg><i class="gap"></i><i class="thumb"></i><i class="rest"></i><svg width="15" height="16"><path d="M4 6l3.500 4L11 6" fill="none" stroke="#555" stroke-width="2"/></svg></div>
    </div>
  </div>
  <button class="acc">单构件输入</button>
  <button class="acc">报表预览</button>
</aside>

<section class="work">
  <div class="tools">
    <div class="line"><div class="band"><i class="grip"></i>
      <button class="t"><svg class="ic"><use href="#brush"/></svg>删除</button><i class="sep"></i>
      <button class="t"><svg class="ic"><use href="#copy"/></svg>复制</button>
      <button class="t"><svg class="ic"><use href="#mirror"/></svg>镜像</button><i class="sep"></i>
      <button class="t"><svg class="ic"><use href="#move"/></svg>移动</button>
      <button class="t"><svg class="ic"><use href="#rotate"/></svg>旋转</button><i class="sep"></i>
      <button class="t" disabled><svg class="ic"><use href="#extend"/></svg>延伸</button>
      <button class="t" disabled><svg class="ic"><use href="#trim"/></svg>修剪</button><i class="sep"></i>
      <button class="t" disabled><svg class="ic"><use href="#brk"/></svg>打断</button>
      <button class="t" disabled><svg class="ic"><use href="#merge"/></svg>合并</button>
      <button class="t" disabled><svg class="ic"><use href="#split"/></svg>分割</button><i class="sep"></i>
      <button class="t"><svg class="ic"><use href="#align"/></svg>对齐<i class="dd near"></i></button>
      <button class="t" disabled><svg class="ic"><use href="#offset"/></svg>偏移</button>
      <button class="t" disabled><svg class="ic"><use href="#stretch"/></svg>拉伸</button><i class="sep"></i>
      <button class="t" disabled><svg class="ic"><use href="#grip"/></svg>设置夹点</button>
    </div></div>
    <div class="line"><div class="band"><i class="grip"></i>
      <select class="combo w57" aria-label="楼层"><option>第6层</option></select>
      <select class="combo" aria-label="构件类别"><option>柱</option></select>
      <select class="combo" aria-label="构件类型"><option>框柱</option></select>
      <select class="combo" aria-label="构件名称"><option>KZ-1</option></select><i class="sep"></i>
      <button class="t"><svg class="ic"><use href="#prop"/></svg>属性</button>
      <button class="t on"><svg class="ic"><use href="#editbar"/></svg>编辑钢筋</button>
      <button class="t"><svg class="ic"><use href="#list"/></svg>构件列表</button>
      <button class="t"><svg class="ic"><use href="#pick"/></svg>拾取构件</button>
    </div>
    <div class="band axis"><i class="grip"></i>
      <button class="t"><svg class="ic"><use href="#twopt"/></svg>两点</button>
      <button class="t"><svg class="ic"><use href="#para"/></svg>平行</button>
      <button class="t"><svg class="ic"><use href="#ptang"/></svg>点角<i class="dd"></i></button>
      <button class="t"><svg class="ic"><use href="#three"/></svg>三点辅轴<i class="dd"></i></button>
      <button class="t"><svg class="ic"><use href="#brush"/></svg>删除辅轴</button>
      <button class="t"><svg class="ic"><use href="#deldim"/></svg>删除标注<i class="dd"></i></button>
    </div></div>
    <div class="line"><div class="band"><i class="grip"></i>
      <button class="t"><svg class="ic"><use href="#cursor"/></svg>选择<i class="dd"></i></button><i class="sep"></i>
      <button class="t on"><svg class="ic"><use href="#point"/></svg>点</button>
      <button class="t"><svg class="ic"><use href="#rotpt"/></svg>旋转点</button><i class="sep"></i>
      <button class="t"><svg class="ic"><use href="#smart"/></svg>智能布置<i class="dd near"></i></button><i class="sep"></i>
      <button class="t"><svg class="ic"><use href="#situ"/></svg>原位标注</button>
      <button class="t"><svg class="ic"><use href="#coltab"/></svg>图元柱表</button>
      <button class="t"><svg class="ic"><use href="#adj"/></svg>调整柱端头</button>
      <button class="t"><svg class="ic"><use href="#wallcol"/></svg>按墙位置绘制柱<i class="dd"></i></button>
      <button class="t"><svg class="ic"><use href="#corner"/></svg>自动判断边角柱</button>
      <button class="t"><svg class="ic"><use href="#check"/></svg>查改标注<i class="dd"></i></button>
    </div><div class="band stub"><i class="grip"></i></div></div>
  </div>
  <div class="mark"></div>

  <svg class="canvas" role="img" aria-label="绘图区">
    <rect width="100%" height="100%" fill="#000"/>
    <g fill="none" stroke="#008000" stroke-dasharray="5 1">
      <circle cx="13" cy="13" r="12.500"/><circle cx="13" cy="111" r="12.500"/><circle cx="141" cy="13" r="12.500"/><circle cx="749" cy="13" r="12.500"/><circle cx="1053" cy="13" r="12.500"/>
    </g>
    <g fill="#ccc" class="axisname">
      <text x="13" y="19">B</text><text x="13" y="117">A</text><text x="141" y="19">4</text><text x="749" y="19">5</text><text x="1053" y="19">6</text>
    </g>
    <g fill="#800000" shape-rendering="crispEdges">
      <rect x="115" width="1" height="100%"/><rect x="120" width="1" height="100%"/><rect x="143" width="1" height="100%"/><rect x="166" width="1" height="100%"/><rect x="233" width="1" height="100%"/><rect x="279" width="1" height="100%"/><rect x="583" width="1" height="100%"/><rect x="914" width="1" height="100%"/><rect x="997" width="1" height="100%"/><rect y="265" width="100%" height="1"/>
    </g>
    <g fill="#f00" shape-rendering="crispEdges">
      <rect width="100%" height="1"/><rect x="140" width="1" height="100%"/><rect x="748" width="1" height="100%"/><rect x="1053" width="1" height="100%"/><rect x="26" y="111" width="100%" height="1"/>
      <rect x="55" y="256" width="38" height="4"/><path d="M92 253l13 5-13 5z"/>
    </g>
    <rect x="877" y="1" width="36" height="23" fill="#7d00f5"/>
    <path d="M53 258v-40h4v40zM51 220l4-12 4 12z" fill="#0f0"/>
    <path d="M65 212l5 5 5-5M70 217v4" fill="none" stroke="#0f0"/>
    <path d="M92 237l9 10M101 237l-9 10" stroke="#f00"/>
  </svg>

  <div class="line snap">
    <div class="band"><i class="grip"></i>
      <button class="t"><svg class="ic"><use href="#ortho"/></svg>正交</button>
      <button class="t on"><svg class="ic"><use href="#snap"/></svg>对象捕捉</button>
      <button class="t"><svg class="ic"><use href="#dyn"/></svg>动态输入</button>
    </div>
    <div class="band"><i class="grip"></i>
      <button class="t"><svg class="ic"><use href="#inter"/></svg>交点</button>
      <button class="t on"><svg class="ic"><use href="#perp"/></svg>垂点</button>
      <button class="t on"><svg class="ic"><use href="#mid"/></svg>中点</button>
      <button class="t"><svg class="ic"><use href="#vert"/></svg>顶点</button>
      <button class="t"><svg class="ic"><use href="#coord"/></svg>坐标</button>
    </div>
    <div class="band off"><i class="grip"></i>
      <select class="combo w57" aria-label="偏移方式"><option>不偏移</option></select><i class="sep"></i>
      <label for="ox">X=</label><input id="ox" class="num" value="0" disabled><span>mm</span>
      <label for="oy" class="y">Y=</label><input id="oy" class="num" value="0" disabled><span>mm</span><i class="sep"></i>
      <input type="checkbox" id="rot"><label for="rot" class="dark">旋转</label><input class="num wide" value="0.000" aria-label="旋转角度" disabled><span>°</span>
    </div>
  </div>

  <div class="dock">
    <div class="splitter"><svg width="10" height="10"><rect x=".5" y=".5" width="9" height="9" fill="#e8e0e0" stroke="#402020"/><path d="M2 3l5 5M8 2L3 7" stroke="#401010" stroke-width="1.500"/></svg></div>
    <div class="dockbody">
      <div class="band rowbar">
        <button class="t" aria-label="首行" disabled><svg class="ic"><use href="#first"/></svg></button>
        <button class="t" aria-label="上一行" disabled><svg class="ic"><use href="#prev"/></svg></button>
        <button class="t" aria-label="下一行" disabled><svg class="ic"><use href="#next"/></svg></button>
        <button class="t" aria-label="末行" disabled><svg class="ic"><use href="#last"/></svg></button><i class="sep"></i>
        <button class="t" aria-label="上移" disabled><svg class="ic"><use href="#up"/></svg></button>
        <button class="t" aria-label="下移" disabled><svg class="ic"><use href="#down"/></svg></button><i class="sep"></i>
        <button class="t" disabled><svg class="ic"><use href="#ins"/></svg>插入</button>
        <button class="t" disabled><svg class="ic"><use href="#rem"/></svg>删除</button>
        <button class="t" disabled><svg class="ic"><use href="#scale"/></svg>缩尺配筋</button>
        <button class="t" disabled><svg class="ic"><use href="#info"/></svg>钢筋信息</button>
        <button class="t" disabled><svg class="ic"><use href="#lib"/></svg>钢筋图库</button>
        <button class="t"><svg class="ic"><use href="#other"/></svg>其他<i class="dd near"></i></button>
        <button class="t">关闭</button><i class="sep"></i>
        <span class="total">单构件钢筋总重(kg) : 0</span>
      </div>
      <div class="grid">
        <table>
          <colgroup><col class="c33"><col class="c73"><col class="c56"><col class="c36"><col class="c33"><col class="c201"><col class="c166"><col class="c156"><col class="c61"><col class="c38"><col class="c39"><col class="c49"><col class="c61"><col class="c61"><col></colgroup>
          <thead><tr><th></th><th>筋号</th><th class="cur">直径(mm)</th><th>级别</th><th>图号</th><th>图形</th><th>计算公式</th><th>公式描述</th><th>长度(mm)</th><th>根数</th><th>搭接</th><th>损耗(%)</th><th>单重(kg)</th><th>总重(kg)</th><th class="lastcol">钢筋归类</th></tr></thead>
          <tbody><tr><th>1*</th><td></td><td class="cell"></td><td></td><td></td><td></td><td></td><td></td><td></td><td></td><td></td><td></td><td></td><td></td><td></td></tr></tbody>
        </table>
        <div class="hscroll"><svg width="17" height="15"><path d="M10 4L6 7.500l4 3.500" fill="none" stroke="#555" stroke-width="2"/></svg><i class="thumb"></i><i class="rest"></i><svg width="17" height="15"><path d="M6 4l4 3.500L6 11" fill="none" stroke="#555" stroke-width="2"/></svg></div>
      </div>
    </div>
  </div>
</section>
</div>

<footer class="status"><span class="s1">X=49773 Y=5141</span><span class="s2">层高:2.8m</span><span class="s3">底标高:17.55m</span><span class="s4">0</span><span class="s5">名称在当前层当前构件类型下不允许重名</span><span class="s6">787 FPS</span></footer>
</div>

<div class="taskbar">
  <button class="start" aria-label="开始"><svg width="16" height="16"><path d="M0 2l7-1v6.500H0zM8 1l8-1v7.500H8zM0 8.500h7V15l-7-1zM8 8.500h8V16l-8-1z" fill="#fff"/></svg></button>
  <div class="search"><svg width="22" height="22"><circle cx="11" cy="11" r="9" fill="none" stroke="#fff" stroke-width="3"/></svg><input type="text" aria-label="搜索" placeholder="在这里输入你要搜索的内容"><svg width="12" height="18"><rect x="3.500" y="1.500" width="5" height="10" fill="none" stroke="#aaa"/><path d="M.5 9v5h11V9M6 14v3M3 16.500h6" fill="none" stroke="#aaa"/></svg></div>
  <button class="wide" aria-label="任务视图"><svg width="22" height="16"><path d="M5.500 1.500h11v13h-11zM3 3.500H1.500v9H3M19 3.500h1.500v9H19" fill="none" stroke="#fff"/></svg></button>
  <button class="wide" aria-label="风扇"><svg width="22" height="22"><g fill="#e8e8e8"><rect x="1" y="1" width="11" height="11" rx="4"/><rect x="11" y="1" width="10" height="11" rx="4"/><rect x="1" y="10" width="11" height="11" rx="4"/><rect x="10" y="10" width="11" height="11" rx="4"/></g><path d="M11 11Q8 6 11 1M11 11q5-3 10 0M11 11q3 5 0 10M11 11q-5 3-10 0" fill="none" stroke="#010b0f" stroke-width="1.300"/></svg></button>
  <button class="wide white" aria-label="浏览器"><svg width="24" height="24"><use href="#eball"/><path d="M3 22Q-1 17 9 9T22 2q1 1-1 4" fill="none" stroke="#eee" stroke-width="1.200"/></svg></button>
  <button class="wide" aria-label="旋涡"><svg width="22" height="22"><path d="M20 3q-5 3-9 1-8 1-8 8 1 7 8 7 6-1 6-6-1-5-6-4-4 1-3 5 2 2 5 1v-3h-2M19 7q2 8-5 12" fill="none" stroke="#ddd" stroke-width="1.200"/></svg></button>
  <button class="wide" aria-label="Edge"><svg width="24" height="24"><path d="M2 11Q4 2 12 2q9 0 9 9v3H9q0 4 5 5 3 0 6-2v4q-4 2-8 1-7-1-7-8 0-4 5-7-5 1-8 4zM9 10h7q-1-4-4-4-3 1-3 4z" fill="#0a78d7"/></svg></button>
  <div class="apps">
  <button class="ie" aria-label="IE"><svg width="24" height="24"><use href="#eball"/><path d="M3 23Q-2 18 8 9T23 3" fill="none" stroke="#f8c828" stroke-width="2"/></svg></button>
  <button aria-label="资源管理器"><svg width="22" height="20"><path d="M0 1h8l2 2h11v16H0z" fill="#f8d878"/><path d="M0 5h21v14H0z" fill="#fde9a0"/><path d="M4 19v-8h13v8h-4v-4H8v4z" fill="#38a0dc"/></svg></button>
  <button class="run" aria-label="应用"><svg width="26" height="26"><path d="M25 3q-3 5-8 4-7-1-8 6 1 6 6 6 4-1 3-4h-4q0-4 4-4h5q1 13-10 13Q2 23 2 13 3 2 14 2q5 2 11 1z" fill="url(#gs)"/></svg></button>
  <button class="run white" aria-label="360浏览器"><svg width="24" height="24"><circle cx="12" cy="12" r="10.500" fill="#5cb82c"/><use href="#eball" x="3" y="3" width="18" height="18"/><path d="M2 19Q5 9 21 4" fill="none" stroke="#d8f4c0" stroke-width="1.300"/></svg></button>
  <button class="run active" aria-label="广联达"><svg width="24" height="24"><use href="#logo"/></svg></button>
  <button class="run" aria-label="便笺"><svg width="24" height="24"><rect width="24" height="24" rx="2" fill="#f49a1c"/><path d="M4 5h13v14H4z" fill="#fff"/><path d="M6 9h7M6 12h6M6 15h4" stroke="#888"/><path d="M10 15L19 3l3 2-9 12-4 2z" fill="#8c4c18" stroke="#fff"/></svg></button>
  <button class="run" aria-label="帮助"><svg width="22" height="24"><path d="M2 9h11v13H2z" fill="#eee"/><path d="M4 12h7M4 15h7M4 18h7" stroke="#888"/><path d="M9 7q0-4 4-4t4 3-4 5v3" fill="none" stroke="#f4e800" stroke-width="3"/><path d="M11 16h4v3h-4z" fill="#f4e800"/></svg></button>
  </div>
  <span class="links">链接</span>
  <span class="two cpu"><span>59%</span><span>CPU使用</span></span>
  <div class="tray">
    <svg width="14" height="10"><path d="M1 8l6-6 6 6" fill="none" stroke="#fff" stroke-width="1.300"/></svg>
    <svg width="16" height="14"><path d="M4.500 4.500h10v7h-10z" fill="none" stroke="#fff"/><path d="M6 6h7v4H6zM1 2h5v3H1zM2 0v2M5 0v2M3.500 5v4" fill="#fff" stroke="#fff"/></svg>
    <svg width="14" height="14"><path d="M1 13Q1 2 13 2M4 13q0-7 9-7M7 13q0-4 6-4" fill="none" stroke="#ccc" stroke-width="1.500"/><circle cx="11" cy="12" r="2" fill="#fff"/></svg>
    <svg width="16" height="14"><path d="M1.500 4.500h3l3-3v11l-3-3h-3z" fill="none" stroke="#fff"/><path d="M9 5q2 2 0 4M11 3q4 4 0 8M13 2q5 5 0 10" fill="none" stroke="#ccc"/></svg>
    <svg width="23" height="14"><rect x=".5" y=".5" width="22" height="12" fill="none" stroke="#fff"/><path d="M3 4h17M3 6.500h17" stroke="#fff" stroke-width="1.500" stroke-dasharray="1.500 1"/><path d="M5 9.500h13" stroke="#fff"/></svg>
    <span>中</span>
    <svg class="ic"><use href="#sogou"/></svg>
  </div>
  <span class="two clock"><span>17:10</span><span>2018/4/20</span></span>
  <button class="note" aria-label="通知中心"><svg width="26" height="26"><path d="M1 2h16v12H9l-4 4v-4H1z" fill="#fff"/><path d="M4 5.500h10M4 8h10M4 10.500h6" stroke="#000"/><circle cx="16" cy="17" r="8" fill="#2c2c2c" stroke="#888"/><text x="16" y="21">1</text></svg></button>
</div>
</body>
</html>
```

FILE: styles.css
```css
* { box-sizing: border-box; }
html, body { height: 100%; }
body {
  margin: 0;
  display: flex;
  flex-direction: column;
  overflow: hidden;
  background: #f0f0f0;
  color: #000;
  font: 12px/16px "Noto Sans", "Noto Sans CJK SC", sans-serif;
  white-space: nowrap;
}
button, input, select { font: inherit; color: inherit; margin: 0; }
button { border: 0; background: none; padding: 0; }
svg { display: block; flex: none; }
ul { margin: 0; padding: 0; list-style: none; }
.sprite { position: absolute; width: 0; height: 0; }
.ic { width: 16px; height: 16px; }
.app { flex: 1; min-height: 0; display: flex; flex-direction: column; position: relative; }

/* title bar */
.titlebar { position: relative; display: flex; align-items: center; height: 24px; flex: none; padding-left: 2px; gap: 5px; background: #fff; }
.titlebar h1 { margin: 0; font-size: 12px; font-weight: 400; }
.titlebar h1 span { font-size: 13px; }
.winctl { align-self: flex-start; margin-left: auto; display: flex; padding-right: 1px; height: 20px; }
.winctl button { width: 46px; display: grid; place-items: center; }
.ball { position: absolute; left: 1077px; top: -28px; width: 46px; height: 46px; border-radius: 50%; border: 2px solid #b8b8b8; background: #3cc060; box-shadow: 0 2px 6px #888; color: #fff; font-weight: 700; display: flex; align-items: flex-end; justify-content: center; z-index: 2; }
.ime { position: absolute; left: 704px; top: 3px; width: 204px; height: 24px; display: flex; align-items: center; gap: 6px; padding-left: 30px; background: #fff; border: 1px solid #b8cce0; color: #1e70c4; z-index: 2; }
.ime b { font-size: 15px; }
.ime .s { position: absolute; left: -3px; top: -3px; width: 27px; height: 26px; }

/* bands and tool buttons */
.band { display: flex; align-items: center; height: 25px; border-radius: 3px; background: linear-gradient(#fefefe, #f1f1f1); }
.t { display: flex; align-items: center; gap: 4px; height: 23px; padding: 0 3px 0 4px; flex: none; }
.t:disabled { color: #6d6d6d; }
.t.on { padding: 0 3px; border: 1px solid #0078d7; background: #dce9f6; }
.t.on + .t.on { margin-left: -1px; }
.dd { width: 0; height: 0; margin: 0 1px 0 2px; border: 3px solid transparent; border-top-color: #000; border-bottom: 0; }
.dd.near { margin: 0 -2px 0 -2px; }
:disabled .dd { border-top-color: #777; }
.sep { width: 1px; height: 14px; margin: 0 1px 0 4px; background: #b4b4b4; flex: none; }
.sep.tall { height: 24px; background: #888; }
.grip { width: 3px; height: 15px; margin: 0 1px 0 3px; background: repeating-linear-gradient(#b4b4b4 0 2px, transparent 2px 4px); flex: none; }
.more { align-self: flex-start; margin-left: auto; font-size: 14px; font-weight: 700; line-height: 12px; }

.menubar { display: flex; align-items: center; height: 29px; flex: none; padding-left: 7px; }
.menus { display: flex; gap: 11px; margin-right: 8px; }
.menubar .band { height: 28px; }
.tip { display: flex; align-items: center; justify-content: center; width: 187px; height: 26px; margin-left: 4px; border-radius: 3px; background: #f6f6f6; color: #5a2d00; text-decoration: none; }
.account { flex: 1; margin-left: 2px; padding-right: 4px; }
.account .t:first-child { padding-right: 0; }
.beans { padding: 0 4px 0 9px; }

.toprow { display: flex; gap: 2px; height: 30px; margin-top: 1px; flex: none; }
.toprow .band { height: 28px; }
.toprow .more { padding-top: 2px; }
.file { width: 150px; padding: 0 2px 0 1px; }
.file .t { padding-right: 2px; }
.calc { width: 549px; padding: 0 3px 0 0; }
.view { flex: 1; padding: 0 4px 0 2px; }
.pick2d { display: flex; align-items: center; gap: 2px; width: 62px; height: 23px; padding-left: 2px; background: #fff; }

select {
  appearance: none;
  height: 22px;
  padding: 0 18px 0 1px;
  border: 0;
  border-radius: 0;
  background: #fff url("data:image/svg+xml,%3Csvg xmlns='http://www.w3.org/2000/svg' width='12' height='22'%3E%3Crect width='12' height='22' fill='%23f7f7f7'/%3E%3Cpath d='M3 10h6l-3 3z'/%3E%3C/svg%3E") right center no-repeat;
}
.pick2d select { flex: 1; min-width: 0; padding-right: 12px; }
.combo { width: 69px; margin-right: 3px; }
.combo.w57 { width: 57px; }
.grip + .combo { margin-left: 2px; }
.combo + .sep { margin-left: 1px; }

/* layout */
.main { flex: 1; min-height: 0; display: flex; gap: 5px; }
.side { width: 226px; display: flex; flex-direction: column; flex: none; padding-bottom: 2px; }
.sidehead { display: flex; align-items: center; height: 16px; margin-bottom: 1px; gap: 10px; padding-right: 4px; background: #0055e5; color: #fff; font-size: 13px; flex: none; }
.sidehead span { flex: 1; }
.acc { height: 22px; border: 1px solid #9a9a9a; border-left-color: #ccc; box-shadow: inset 1px 1px #fff; background: #f0f0f0; flex: none; }
.treepane { flex: 1; min-height: 0; display: flex; flex-direction: column; padding: 0 1px 1px; border: 1px solid #aaa; border-width: 0 1px; }
.treebar { display: flex; gap: 7px; height: 27px; padding: 6px 5px 0; flex: none; align-items: flex-start; }
.treebox { flex: 1; min-height: 0; display: flex; border: 1px solid #828790; background: #fff; padding: 1px; }
.tree { flex: 1; overflow: hidden; font-family: "Liberation Serif", "Noto Sans CJK SC", serif; }
.tree li { display: flex; align-items: center; height: 16px; background-repeat: no-repeat; }
.tree .k {
  padding-left: 42px;
  background-image: repeating-linear-gradient(#808080 0 1px, transparent 1px 2px), repeating-linear-gradient(#808080 0 1px, transparent 1px 2px), repeating-linear-gradient(90deg, #808080 0 1px, transparent 1px 2px);
  background-size: 1px 16px, 1px 16px, 10px 1px;
  background-position: 11px 0, 30px 0, 31px 8px;
}
.tree .k.end { background-size: 1px 16px, 1px 9px, 10px 1px; }
.tree .k span { padding: 0 7px 0 3px; }
.tree .sel > * { background: #d9d9d9; }
.tree .g {
  padding-left: 22px;
  gap: 4px;
  background-image: url("data:image/svg+xml,%3Csvg xmlns='http://www.w3.org/2000/svg' width='22' height='16'%3E%3Cpath d='M6 6l4 4 4-4' fill='none' stroke='%23404040' stroke-width='2'/%3E%3Cpath d='M19 8.5h3' stroke='%23808080' stroke-dasharray='1 1'/%3E%3C/svg%3E");
}
.tree .shut { background-image: url("data:image/svg+xml,%3Csvg xmlns='http://www.w3.org/2000/svg' width='22' height='16'%3E%3Cpath d='M8 4l4 4-4 4' fill='none' stroke='%23a0a0a0' stroke-width='2'/%3E%3Cpath d='M19 8.5h3' stroke='%23808080' stroke-dasharray='1 1'/%3E%3C/svg%3E"); }
.vscroll { width: 15px; display: flex; flex-direction: column; background: #f0f0f0; }
.vscroll .gap { flex: 31; }
.vscroll .thumb { flex: 225; background: #cdcdcd; }
.vscroll .rest { flex: 196; }

.work { flex: 1; min-width: 0; display: flex; flex-direction: column; position: relative; }
.tools { display: flex; flex-direction: column; gap: 3px; padding-bottom: 1px; }
.line { display: flex; }
.axis { margin-left: 75px; }
.stub { margin-left: 206px; width: 29px; }
.mark { position: absolute; left: 625px; top: 37px; width: 152px; height: 59px; border: 3px solid #00f; z-index: 2; }
.canvas { flex: 1; width: 100%; min-height: 0; }
.axisname { font-size: 16px; text-anchor: middle; }
.snap { height: 34px; padding-top: 1px; gap: 2px; align-items: flex-start; }
.snap .band { height: 28px; }
.off { color: #6d6d6d; padding-right: 3px; }
.off select { color: #000; }
.off label { padding: 0 3px 0 1px; }
.off .y { padding-left: 5px; }
.off .dark { color: #000; padding: 0 5px 0 8px; }
.num { width: 58px; height: 23px; padding: 0 18px 0 0; border: 1px solid #7a7a7a; text-align: right; color: #6d6d6d; background: #f4f4f4 url("data:image/svg+xml,%3Csvg xmlns='http://www.w3.org/2000/svg' width='12' height='21'%3E%3Cpath d='M3 7h5l-2.500-3zM3 14h5l-2.500 3z' fill='%23555'/%3E%3C/svg%3E") right center no-repeat; }
.num.wide { width: 68px; }
.num + span { padding-left: 2px; }
.off input[type=checkbox] { appearance: none; width: 11px; height: 11px; margin-left: 1px; border: 1px solid #999; background: #fff; }

/* bottom dock */
.dock { height: 199px; display: flex; flex: none; }
.splitter { width: 12px; padding: 0 1px; flex: none; }
.splitter::after { content: ""; display: block; height: 184px; margin: 3px 0 0 2px; width: 8px; background: radial-gradient(circle at 1px 1px, #b4b4b4 1px, transparent 2px) 0 0 / 4px 5px; }
.dockbody { flex: 1; min-width: 0; display: flex; flex-direction: column; padding-right: 1px; }
.rowbar { height: 25px; flex: none; }
.total { padding-left: 9px; }
.grid { flex: 1; min-height: 0; display: flex; flex-direction: column; justify-content: space-between; margin-top: 1px; padding: 1px; border: 1px solid #a0a4aa; background: #fff; overflow: hidden; font-family: "Liberation Serif", "Noto Sans CJK SC", serif; }
table { width: 100%; table-layout: fixed; border-collapse: separate; border-spacing: 0; }
th, td { height: 19px; padding: 0; border: 1px solid #bcbcbc; border-width: 0 1px 1px 0; font-weight: 400; text-align: center; overflow: hidden; }
thead th { background: linear-gradient(#fff, #f0f0f0); }
thead .cur { background: linear-gradient(#fbd69a, #f2bf60); color: #5a0050; }
thead .lastcol { text-align: left; padding-left: 10px; border-right: 0; }
tbody th { background: #fdd08a; color: #5a0050; }
tbody .cell { background: #d8e9f8; box-shadow: -1px 0 #000; }
.c33 { width: 33px; } .c36 { width: 36px; } .c38 { width: 38px; } .c39 { width: 39px; } .c49 { width: 49px; } .c56 { width: 56px; } .c61 { width: 61px; } .c73 { width: 73px; } .c156 { width: 156px; } .c166 { width: 166px; } .c201 { width: 201px; }
.hscroll { display: flex; height: 16px; background: #f0f0f0; }
.hscroll .thumb { flex: 720; background: #cdcdcd; }
.hscroll .rest { flex: 365; }

/* status bar */
.status { display: flex; gap: 2px; height: 21px; flex: none; padding-top: 1px; font-family: "Liberation Serif", "Noto Sans CJK SC", serif; }
.status span { border: 1px solid #d4d4d4; padding: 1px 1px 0; background: linear-gradient(#fff, #f0f0f0); }
.s1 { width: 148px; } .s2 { width: 78px; } .s3 { width: 98px; } .s4 { width: 48px; } .s5 { flex: 1; } .s6 { width: 70px; }

/* taskbar */
.taskbar { display: flex; align-items: center; height: 40px; flex: none; background: #010b0f; color: #fff; }
.taskbar button { height: 40px; width: 42px; display: grid; place-items: center; flex: none; }
.taskbar .start { width: 48px; background: #000; }
.search { display: flex; align-items: center; width: 344px; height: 40px; padding: 0 15px 0 9px; gap: 5px; background: #333; }
.search input { flex: 1; min-width: 0; border: 0; padding: 0; background: none; font-size: 14px; }
.search input::placeholder { color: #a0a0a0; opacity: 1; }
.taskbar .wide { width: 50px; }
.taskbar .white { color: #eee; }
.taskbar .ie { color: #38a8f0; }
.apps { display: flex; }
.taskbar .run { border-bottom: 2px solid #76b9ed; background-clip: padding-box; width: 36px; margin: 0 3px; }
.taskbar .active { width: 42px; margin: 0; background: #343c40; }
.links { margin-left: 13px; }
.two { display: flex; flex-direction: column; align-items: center; line-height: 18px; }
.cpu { margin-left: 19px; }
.tray { display: flex; align-items: center; gap: 10px; margin: 0 auto 0 19px; }
.clock { width: 60px; }
.taskbar .note { width: 42px; margin: 0 4px 0 13px; border-right: 1px solid #555; }
.note text { fill: #fff; font-size: 12px; font-weight: 700; text-anchor: middle; }
```
